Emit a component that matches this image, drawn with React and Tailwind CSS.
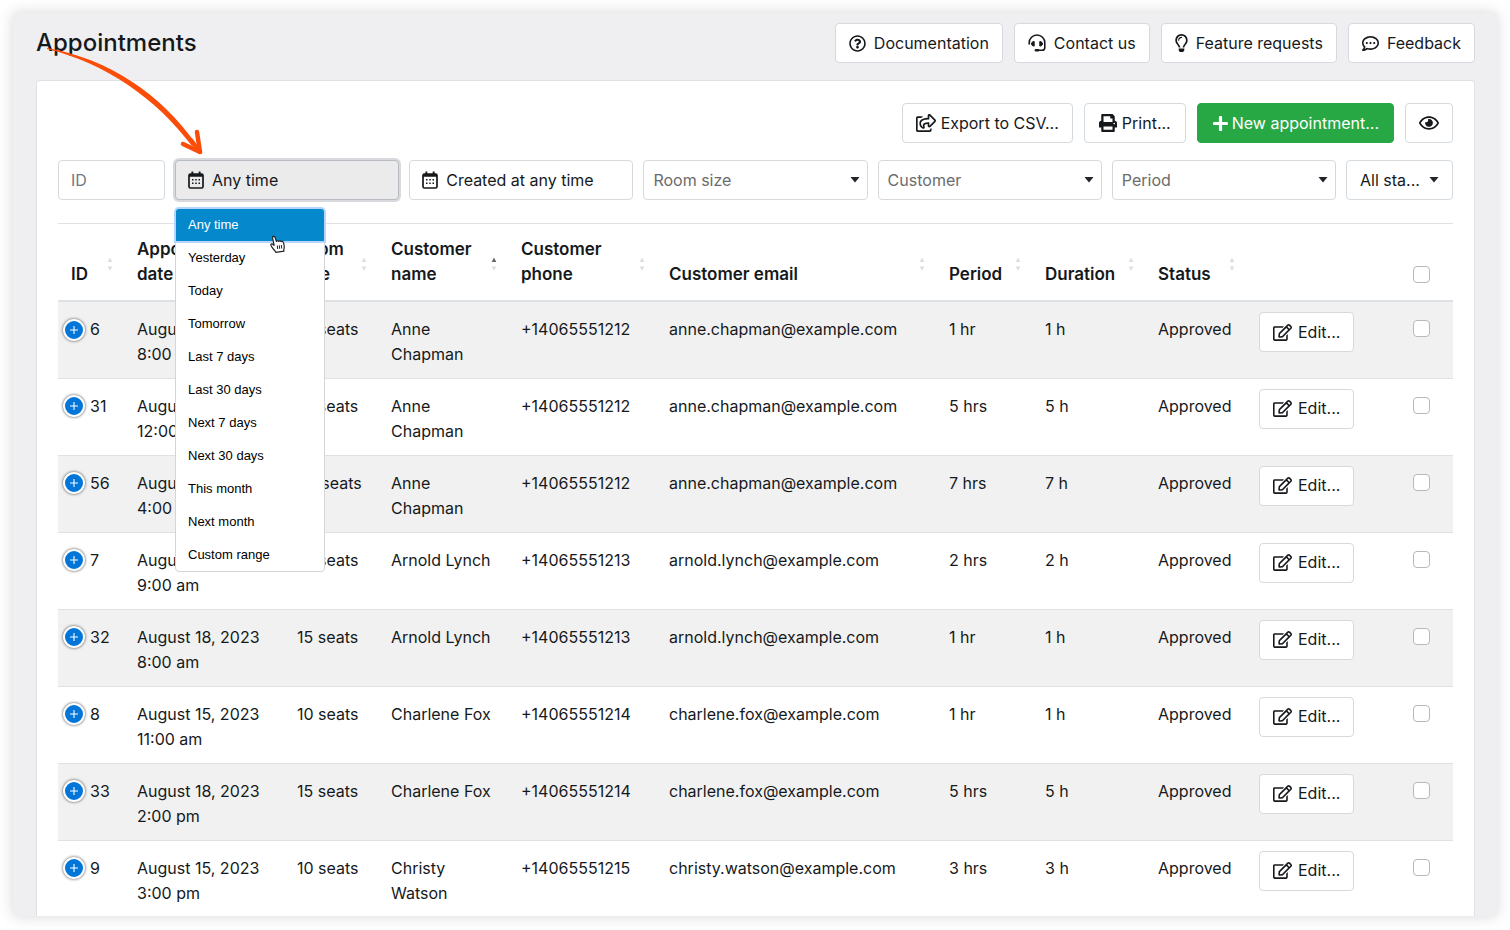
import { FaRegQuestionCircle, FaRegLightbulb, FaRegCommentDots, FaRegShareSquare, FaPrint, FaPlus, FaRegEye, FaRegEdit } from "react-icons/fa";

const ranges = ["Any time", "Yesterday", "Today", "Tomorrow", "Last 7 days", "Last 30 days", "Next 7 days", "Next 30 days", "This month", "Next month", "Custom range"];

const rows = [
  ["6", "August 15, 2023", "8:00 am", "10 seats", "Anne Chapman", "+14065551212", "anne.chapman@example.com", "1 hr", "1 h"],
  ["31", "August 18, 2023", "12:00 pm", "15 seats", "Anne Chapman", "+14065551212", "anne.chapman@example.com", "5 hrs", "5 h"],
  ["56", "August 22, 2023", "4:00 pm", "20 seats", "Anne Chapman", "+14065551212", "anne.chapman@example.com", "7 hrs", "7 h"],
  ["7", "August 15, 2023", "9:00 am", "10 seats", "Arnold Lynch", "+14065551213", "arnold.lynch@example.com", "2 hrs", "2 h"],
  ["32", "August 18, 2023", "8:00 am", "15 seats", "Arnold Lynch", "+14065551213", "arnold.lynch@example.com", "1 hr", "1 h"],
  ["8", "August 15, 2023", "11:00 am", "10 seats", "Charlene Fox", "+14065551214", "charlene.fox@example.com", "1 hr", "1 h"],
  ["33", "August 18, 2023", "2:00 pm", "15 seats", "Charlene Fox", "+14065551214", "charlene.fox@example.com", "5 hrs", "5 h"],
  ["9", "August 15, 2023", "3:00 pm", "10 seats", "Christy Watson", "+14065551215", "christy.watson@example.com", "3 hrs", "3 h"],
];

function CalendarIcon() {
  return (
    <svg className="h-[18px] w-4 shrink-0" viewBox="0 0 16 18" aria-hidden="true">
      <rect x="1" y="3" width="14" height="14" rx="1.4" fill="none" stroke="currentColor" strokeWidth="1.7" />
      <path d="M1 3h14v2.800H1zM3.400.4h1.900v3H3.400zM10.700.4h1.900v3h-1.900z" fill="currentColor" />
      <path d="M4 8h1.500v1.500H4zM7.250 8h1.500v1.500h-1.500zM10.500 8h1.500v1.500h-1.500zM4 11.500h1.500v1.500H4zM7.250 11.500h1.500v1.500h-1.500zM10.500 11.500h1.500v1.500h-1.500z" fill="currentColor" />
    </svg>
  );
}

function HeadsetIcon() {
  return (
    <svg className="size-[18px] shrink-0" viewBox="0 0 18 18" fill="none" stroke="currentColor" strokeWidth="1.600" aria-hidden="true">
      <path d="M1.200 10V8.800a7.800 7.800 0 0 1 15.600 0v4.600a2.800 2.800 0 0 1-2.800 2.800h-4" strokeLinecap="round" />
      <path d="M6.200 7.500c-2.200.3-2.800 1.300-2.800 2.300s.6 2 2.800 2.300z" fill="currentColor" strokeWidth="1" strokeLinejoin="round" />
      <path d="M11.800 7.500c2.200.3 2.800 1.300 2.800 2.300s-.6 2-2.800 2.300z" fill="currentColor" strokeWidth="1" strokeLinejoin="round" />
      <path d="M8 16.200h2" strokeWidth="2.600" strokeLinecap="round" />
    </svg>
  );
}

function Caret() {
  return (
    <svg className="h-[6px] w-[10px] shrink-0" viewBox="0 0 10 6" aria-hidden="true">
      <path d="M.5 0h9L5 5.500z" fill="#212529" />
    </svg>
  );
}

function SortMark({ up }) {
  return (
    <svg className="h-4 w-[6px] shrink-0" viewBox="0 0 6 16" aria-hidden="true">
      <path d="M3 1.500L5.300 6H.7z" fill={up ? "#666" : "#dedede"} />
      <path d="M.7 10.500h4.600L3 15z" fill="#dedede" />
    </svg>
  );
}

const box = "h-10 rounded-[4px] border border-[#d5dadf] bg-white";

function Button({ className = "gap-2 border-[#d5dadf] bg-white px-[13px]", children, ...rest }) {
  return (
    <button type="button" className={`flex h-10 items-center whitespace-nowrap rounded-[4px] border ${className}`} {...rest}>
      {children}
    </button>
  );
}

function Picker({ label }) {
  return (
    <div className="relative min-w-0 flex-1">
      <select aria-label={label} className={`${box} w-full appearance-none pl-[9px] pr-8 text-[#6c6c6c]`}>
        <option>{label}</option>
      </select>
      <span className="pointer-events-none absolute inset-y-0 right-2 flex items-center"><Caret /></span>
    </div>
  );
}

function HeadCell({ children, up, pad = "" }) {
  return (
    <th className={`p-0 pb-[13px] pt-[13px] text-left align-bottom text-[17px] font-semibold ${pad}`}>
      <div className="flex items-end">
        <span className="flex-1">{children}</span>
        <span className="mb-[15px] mr-6"><SortMark up={up} /></span>
      </div>
    </th>
  );
}

function Arrow() {
  return (
    <svg className="pointer-events-none absolute left-[34px] top-[33px] z-20 h-[110px] w-[160px]" viewBox="0 0 160 110" aria-hidden="true">
      <path d="M0 2C62 13 114 48 149 98l-4 2C109 52 58 17 0 3z" fill="#fa4d09" />
      <path d="M136 98l17 8-3-20" fill="none" stroke="#fa4d09" strokeWidth="4.500" strokeLinecap="round" strokeLinejoin="round" />
      <path d="M144 94l9 12" fill="none" stroke="#fa4d09" strokeWidth="4" strokeLinecap="round" />
    </svg>
  );
}

function Pointer() {
  return (
    <svg className="pointer-events-none absolute left-[94px] top-[25px] h-5 w-4" viewBox="0 0 16 20" aria-hidden="true">
      <path d="M5.800 18.300c-.6-1.700-2.500-2.900-3.700-4.900C1.200 11.900.4 10.900 1 10.200c.9-.8 2.200.1 3.100 1.200L2.600 4C2.200 2.200 4.400 1.600 5 3.300l1.400 4.200c.5-1 1.900-1 2.300-.1.600-.8 1.900-.7 2.300.2.700-.6 2.200-.3 2.500 1.100.7 2.400 1.200 4.700.3 6.900l.1 1.500z" fill="#fff" stroke="#222" strokeWidth="1.200" strokeLinejoin="round" />
      <path d="M7.300 11.500l.4 3.500M9.300 11.300l.4 3.500M11.300 11l.4 3.500" stroke="#222" />
    </svg>
  );
}

export default function App() {
  return (
    <div className="h-screen overflow-hidden bg-white px-[13px] pb-[14px] pt-[13px] font-['Inter',sans-serif] text-base leading-[25px] text-[#16191c]">
      <div className="relative h-full bg-[#efeff1] shadow-[0_0_14px_rgba(0,0,0,0.16)]">
        <div className="flex h-full flex-col overflow-hidden pl-[23px] pr-[22px] pt-[10px]">
          <header className="flex items-center justify-between">
            <h1 className="text-2xl font-medium">Appointments</h1>
            <nav className="flex gap-[11px]" aria-label="Help">
              <Button><FaRegQuestionCircle className="size-[17px]" />Documentation</Button>
              <Button><HeadsetIcon />Contact us</Button>
              <Button><FaRegLightbulb className="h-[18px] w-[13px]" />Feature requests</Button>
              <Button><FaRegCommentDots className="size-[17px]" />Feedback</Button>
            </nav>
          </header>

          <main className="mt-[17px] flex-1 rounded-t-[4px] border border-b-0 border-[#dfe1e4] bg-white px-[21px] pt-[22px]">
            <div className="flex justify-end gap-[11px]">
              <Button className="gap-[5px] border-[#d5dadf] bg-white px-[13px]"><FaRegShareSquare className="size-5" />Export to CSV...</Button>
              <Button className="gap-[5px] border-[#d5dadf] bg-white px-[14px]"><FaPrint className="size-[18px]" />Print...</Button>
              <Button className="gap-[3px] border-[#28a745] bg-[#28a745] px-[14px] text-white"><FaPlus className="size-[17px]" />New appointment...</Button>
              <Button aria-label="Preview"><FaRegEye className="size-5" /></Button>
            </div>

            <div className="mt-[17px] flex gap-2.5">
              <input aria-label="ID" placeholder="ID" className={`${box} w-[107px] px-3 placeholder:text-[#70777e]`} />
              <div className="relative min-w-0 flex-1">
                <button type="button" aria-expanded="true" className="flex h-10 w-full items-center gap-2 rounded-[4px] border border-[#b8bdc4] bg-[#ebebeb] px-3 ring-2 ring-[#d8dadd]">
                  <CalendarIcon />Any time
                </button>
                <div className="absolute left-0 top-12 z-10 w-[150px] rounded-[4px] border border-[#d5d5d5] bg-white font-['Liberation_Sans',sans-serif] text-[13px] leading-[18px] text-black">
                  <span className="absolute -top-[5px] left-3 size-[10px] rotate-45 bg-white" />
                  <ul className="relative">
                    {ranges.map((r, i) => (
                      <li key={r}>
                        <button type="button" className={i === 0 ? "block h-8 w-full rounded-t-[3px] bg-[#0588cc] px-3 text-left text-white ring-2 ring-[#b5d7ff]" : "block h-[33px] w-full px-3 text-left"}>{r}</button>
                      </li>
                    ))}
                  </ul>
                  <Pointer />
                </div>
              </div>
              <div className="min-w-0 flex-1">
                <button type="button" className={`${box} flex w-full items-center gap-2 px-3`}><CalendarIcon />Created at any time</button>
              </div>
              <Picker label="Room size" />
              <Picker label="Customer" />
              <Picker label="Period" />
              <Button className="w-[107px] justify-between border-[#d5dadf] bg-white px-[13px]">All sta...<Caret /></Button>
            </div>

            <table className="mt-[23px] w-full table-fixed border-collapse border-t border-[#dee2e6]">
              <colgroup>
                <col className="w-[79px]" /><col className="w-[160px]" /><col className="w-[94px]" /><col className="w-[130px]" /><col className="w-[148px]" /><col className="w-[280px]" /><col className="w-[96px]" /><col className="w-[113px]" /><col className="w-[101px]" /><col /><col className="w-[40px]" />
              </colgroup>
              <thead>
                <tr className="border-b-2 border-[#dee2e6]">
                  <HeadCell pad="pl-[13px]">ID</HeadCell>
                  <HeadCell>Appointment<br />date</HeadCell>
                  <HeadCell>Room<br />size</HeadCell>
                  <HeadCell up>Customer<br />name</HeadCell>
                  <HeadCell>Customer<br />phone</HeadCell>
                  <HeadCell>Customer email</HeadCell>
                  <HeadCell>Period</HeadCell>
                  <HeadCell>Duration</HeadCell>
                  <HeadCell>Status</HeadCell>
                  <td />
                  <td className="pb-[17px] align-bottom">
                    <input type="checkbox" aria-label="Select all" className="block size-[17px] appearance-none rounded-[4px] border border-[#b4b8c0] bg-white" />
                  </td>
                </tr>
              </thead>
              <tbody>
                {rows.map(([id, date, time, seats, name, phone, email, period, duration]) => (
                  <tr key={id} className="h-[77px] border-b border-[#dee2e6] align-top odd:bg-[#f1f1f1] *:pt-[15px]">
                    <td className="pl-[5px]">
                      <div className="flex items-center gap-[5px]">
                        <button type="button" aria-label={`Expand ${id}`} className="flex size-[22px] items-center justify-center rounded-full border-2 border-white bg-[#0275d8] shadow-[0_0_3px_#444]">
                          <svg className="size-[10px]" viewBox="0 0 10 10" aria-hidden="true"><path d="M5 1v8M1 5h8" stroke="#fff" strokeWidth="1.100" /></svg>
                        </button>
                        {id}
                      </div>
                    </td>
                    <td>{date}<br />{time}</td>
                    <td>{seats}</td>
                    <td className="pr-6">{name}</td>
                    <td>{phone}</td>
                    <td>{email}</td>
                    <td>{period}</td>
                    <td>{duration}</td>
                    <td>Approved</td>
                    <td className="!pt-[10px]"><Button className="gap-[6px] border-[#d5dadf] bg-white px-[13px]"><FaRegEdit className="size-[19px]" />Edit...</Button></td>
                    <td className="!pt-[18px]">
                      <input type="checkbox" aria-label={`Select ${id}`} className="block size-[17px] appearance-none rounded-[4px] border border-[#b4b8c0] bg-white" />
                    </td>
                  </tr>
                ))}
              </tbody>
            </table>
          </main>
        </div>
        <Arrow />
      </div>
    </div>
  );
}
